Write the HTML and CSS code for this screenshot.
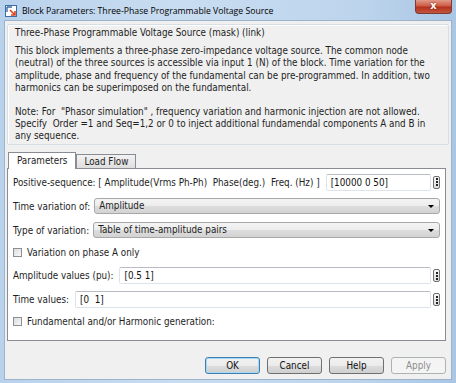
FILE: index.html
```html
<!DOCTYPE html>
<html lang="en">
<head>
  <meta charset="UTF-8" />
  <title>Block Parameters</title>
  <link rel="stylesheet" href="styles.css">
</head>
<body>
  <div class="window">
    <div class="titlebar">
      <svg class="app-icon" width="12" height="12" viewBox="0 0 12 12">
        <rect x="0.5" y="0.5" width="11" height="11" fill="#fff" stroke="#3b6ea5"/>
        <path d="M2 2h5M2 2v5" stroke="#3b6ea5" stroke-width="1.4" fill="none"/>
        <path d="M5 5l5 5M10 6v4H6" stroke="#d9431e" stroke-width="1.6" fill="none"/>
      </svg>
      <span class="title">Block Parameters: Three-Phase Programmable Voltage Source</span>
      <div class="close">x</div>
    </div>

    <div class="client">
      <div class="group">
        <div class="group-title">Three-Phase Programmable Voltage Source (mask) (link)</div>
        <p>This block implements a three-phase zero-impedance voltage source. The common node<br>(neutral) of the three sources is accessible via input 1 (N) of the block. Time variation for the<br>amplitude, phase and frequency of the fundamental can be pre-programmed. In addition, two<br>harmonics can be superimposed on the fundamental.</p>
        <p>Note: For &nbsp;"Phasor simulation" , frequency variation and harmonic injection are not allowed.<br>Specify &nbsp;Order =1 and Seq=1,2 or 0 to inject additional fundamendal components A and B in<br>any sequence.</p>
      </div>

      <div class="tabs">
        <div class="tab active">Parameters</div>
        <div class="tab">Load Flow</div>
      </div>

      <div class="panel">
        <div class="row row-first">
          <span class="label">Positive-sequence: [ Amplitude(Vrms Ph-Ph) &nbsp;Phase(deg.) &nbsp;Freq. (Hz) ]</span>
          <div class="edit">[10000 0 50]</div>
          <div class="more"><i></i><i></i><i></i></div>
        </div>

        <div class="row row-combo">
          <span class="label">Time variation of:</span>
          <div class="combo">Amplitude<b class="arrow"></b></div>
        </div>

        <div class="row row-combo2">
          <span class="label">Type of variation:</span>
          <div class="combo">Table of time-amplitude pairs<b class="arrow"></b></div>
        </div>

        <div class="row row-check">
          <span class="check"></span>
          <span class="label">Variation on phase A only</span>
        </div>

        <div class="row row-edit">
          <span class="label">Amplitude values (pu):</span>
          <div class="edit">[0.5 1]</div>
          <div class="more"><i></i><i></i><i></i></div>
        </div>

        <div class="row row-edit2">
          <span class="label">Time values:</span>
          <div class="edit">[0 &nbsp;1]</div>
          <div class="more"><i></i><i></i><i></i></div>
        </div>

        <div class="row row-check2">
          <span class="check"></span>
          <span class="label">Fundamental and/or Harmonic generation:</span>
        </div>
      </div>

      <div class="buttons">
        <button class="btn default">OK</button>
        <button class="btn">Cancel</button>
        <button class="btn">Help</button>
        <button class="btn disabled">Apply</button>
      </div>
    </div>
  </div>
</body>
</html>
```

FILE: styles.css
```css
html, body {
  margin: 0;
  height: 100%;
}

body {
  background: #b4cde7;
  font-family: "DejaVu Sans Condensed", "DejaVu Sans", sans-serif;
  font-stretch: condensed;
  font-size: 9.8px;
  color: #1e1e1e;
  overflow: hidden;
}

.window {
  width: 456px;
  height: 383px;
  background: linear-gradient(to right, #b9d2ec, #c9ddf1 40%, #bcd4ec 80%, #a9c6e5);
}

/* title bar */
.titlebar {
  height: 20px;
  display: flex;
  align-items: center;
  position: relative;
}

.app-icon {
  margin-left: 5px;
  margin-top: 2px;
}

.title {
  margin-left: 5px;
  margin-top: 2px;
  font-family: "Open Sans", sans-serif;
  font-stretch: normal;
  font-size: 8.7px;
  color: #000;
}

.close {
  position: absolute;
  right: 4px;
  top: 0;
  width: 37px;
  height: 14px;
  border: 1px solid #7b3a35;
  border-top: none;
  border-radius: 0 0 4px 4px;
  background: linear-gradient(#e09a88, #cf5b45 45%, #b5321d 55%, #c4553e);
  color: #fff;
  font-family: "DejaVu Sans", sans-serif;
  font-weight: bold;
  font-size: 11px;
  line-height: 12px;
  text-align: center;
  text-shadow: 0 0 2px #6b1a10;
  box-sizing: border-box;
}

/* client area */
.client {
  margin: 0 4px 0 4px;
  height: 360px;
  background: #f0f0f0;
  border: 1px solid #9db3cc;
  box-sizing: border-box;
  padding: 3px 2px 0 2px;
}

.group {
  height: 121px;
  border: 1px solid #d5dfe5;
  box-shadow: inset 1px 1px 0 #fff;
  border-radius: 2px;
  padding: 2px 8px 0 7px;
  box-sizing: border-box;
  white-space: nowrap;
}

.group-title {
  line-height: 12px;
  margin-bottom: 6px;
}

.group p {
  margin: 0 0 11px 0;
  line-height: 12.4px;
}

/* tabs */
.tabs {
  display: flex;
  align-items: flex-end;
  height: 16px;
  margin-top: 7px;
  padding-left: 1px;
}

.tab {
  border: 1px solid #898c95;
  border-bottom: none;
  padding: 0 7px;
  height: 14px;
  line-height: 13px;
  background: linear-gradient(#f2f2f2, #dedede);
  box-sizing: border-box;
}

.tab.active {
  height: 17px;
  line-height: 16px;
  background: #fff;
  padding: 0 8px;
  margin-bottom: -1px;
  position: relative;
  z-index: 1;
}

.panel {
  height: 173px;
  background: #fff;
  border: 1px solid #898c95;
  margin-right: 3px;
  box-sizing: border-box;
  padding: 4px 5px 0 5px;
}

.row {
  display: flex;
  align-items: center;
}

.label {
  white-space: nowrap;
}

.row-first { height: 18px; }
.row-combo { height: 16px; margin-top: 7px; }
.row-combo2 { height: 16px; margin-top: 8px; }
.row-check { height: 11px; margin-top: 9px; }
.row-edit { height: 17px; margin-top: 9px; }
.row-edit2 { height: 17px; margin-top: 7px; }
.row-check2 { height: 11px; margin-top: 8px; }

.edit {
  flex: 1;
  height: 17px;
  line-height: 16px;
  margin-left: 6px;
  padding-left: 4px;
  border: 1px solid #dde3ea;
  border-top-color: #b9bdc3;
  border-radius: 2px;
  box-sizing: border-box;
  color: #111;
}

.more {
  width: 7px;
  height: 13px;
  margin-left: 2px;
  border: 1px solid #707070;
  border-radius: 2px;
  background: linear-gradient(#f6f6f6, #dcdcdc);
  box-sizing: border-box;
  display: flex;
  flex-direction: column;
  align-items: center;
  justify-content: center;
  gap: 1px;
}

.more i {
  width: 2px;
  height: 2px;
  background: #222;
}

.combo {
  flex: 1;
  position: relative;
  height: 16px;
  line-height: 14px;
  margin-left: 4px;
  margin-right: 0;
  padding-left: 4px;
  border: 1px solid #a8a8a8;
  border-radius: 3px;
  background: linear-gradient(#f4f4f4, #ececec 50%, #dddddd 51%, #d3d3d3);
  box-sizing: border-box;
}

.arrow {
  position: absolute;
  right: 5px;
  top: 6px;
  border-left: 3px solid transparent;
  border-right: 3px solid transparent;
  border-top: 3px solid #000;
}

.check {
  width: 9px;
  height: 9px;
  border: 1px solid #8e8f8f;
  background: linear-gradient(135deg, #dcdcdc, #f9f9f9);
  box-sizing: border-box;
  margin-right: 5px;
}

/* dialog buttons */
.buttons {
  display: flex;
  justify-content: flex-end;
  gap: 7px;
  margin-top: 16px;
  margin-right: 3px;
}

.btn {
  width: 55px;
  height: 17px;
  padding: 0;
  font-family: "DejaVu Sans Condensed", "DejaVu Sans", sans-serif;
  font-stretch: condensed;
  font-size: 9.8px;
  color: #111;
  border: 1px solid #707070;
  border-radius: 3px;
  background: linear-gradient(#f2f2f2, #ebebeb 50%, #dddddd 51%, #cfcfcf);
}

.btn.default {
  border-color: #3c7fb1;
  box-shadow: inset 0 0 0 1px #a8d8f4;
}

.btn.disabled {
  color: #8c8c8c;
  border-color: #adb2b5;
  background: #f4f4f4;
}
```
